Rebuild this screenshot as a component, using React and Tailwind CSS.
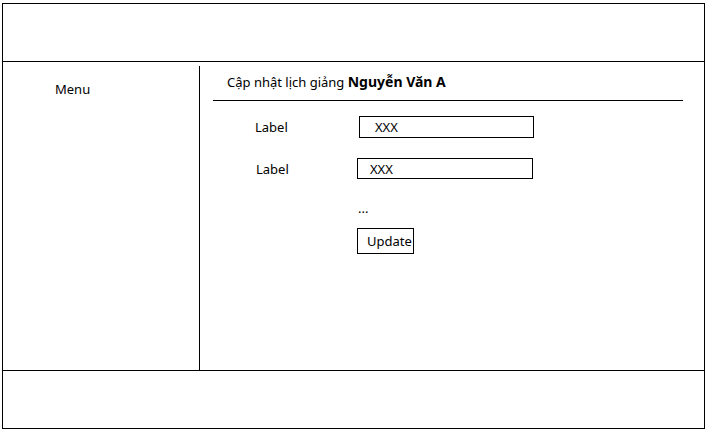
export default function App() {
  const font = { fontFamily: '"Noto Sans", "Open Sans", sans-serif' };
  return (
    <div className="w-[707px] h-[432px] bg-white pt-[3px] pl-[2px] text-black" style={font}>
      <div className="w-[703px] h-[426px] border border-black flex flex-col text-[13px] leading-[18px]">
        <div className="h-[58px] border-b border-black shrink-0" />
        <div className="h-[309px] border-b border-black flex shrink-0">
          <div className="w-[196px] shrink-0 pt-[18px] pl-[52px]">Menu</div>
          <div className="w-px bg-black mt-[4px] shrink-0" />
          <div className="flex-1 flex flex-col">
            <div className="ml-[13px] w-[470px] h-[39px] pt-[11px] pl-[14px] border-b border-black">
              Cập nhật lịch giảng <span className="font-bold text-[14px] leading-[18px]">Nguyễn Văn A</span>
            </div>
            <div className="flex items-center mt-[15px] pl-[55px]">
              <div className="w-[104px]">Label</div>
              <div className="w-[175px] h-[22px] border border-black pl-[15px] flex items-center">XXX</div>
            </div>
            <div className="flex items-center mt-[20px] pl-[56px]">
              <div className="w-[101px]">Label</div>
              <div className="w-[176px] h-[21px] border border-black pl-[12px] flex items-center">XXX</div>
            </div>
            <div className="mt-[20px] pl-[158px]">...</div>
            <div className="mt-[11px] pl-[157px]">
              <div className="w-[57px] h-[26px] border border-black pl-[9px] flex items-center">Update</div>
            </div>
          </div>
        </div>
        <div className="flex-1" />
      </div>
    </div>
  );
}
